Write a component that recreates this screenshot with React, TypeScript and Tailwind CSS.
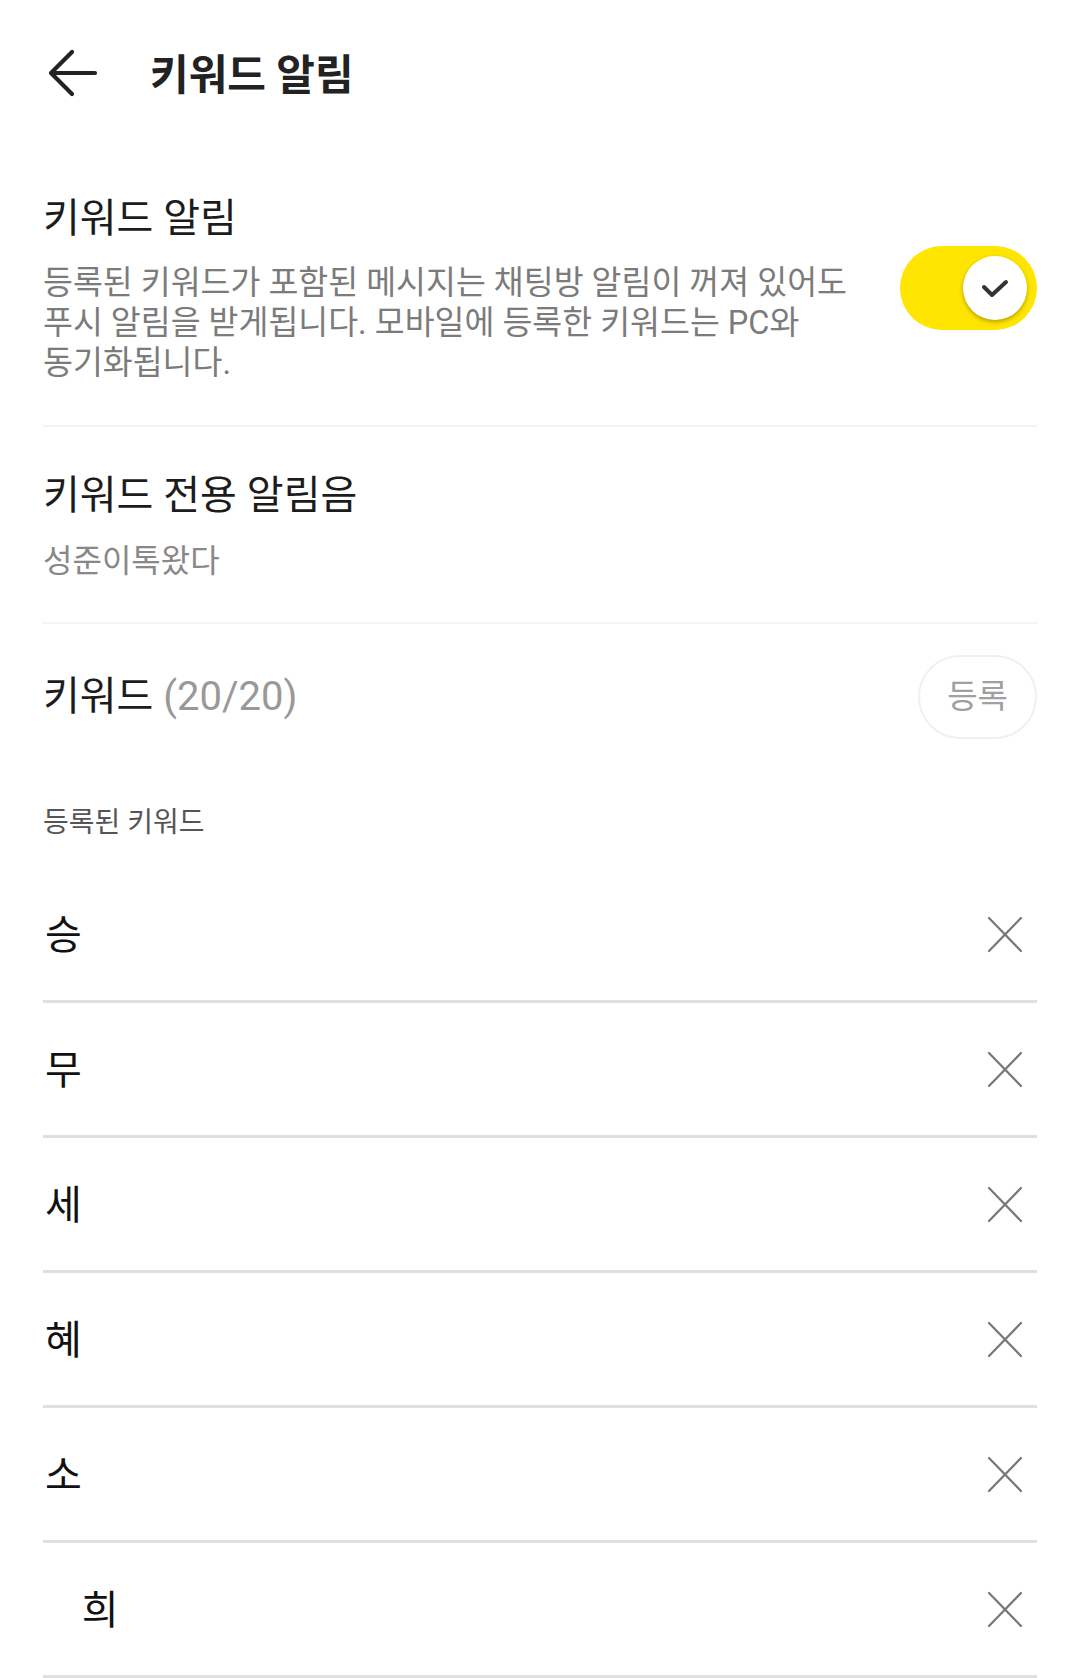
import React from "react";

const KEYWORDS = [
  { hidden: "", text: "승" },
  { hidden: "", text: "무" },
  { hidden: "", text: "세" },
  { hidden: "", text: "혜" },
  { hidden: "", text: "소" },
  { hidden: "김", text: "희" },
];

function BackArrow() {
  return (
    <svg width="50" height="48" viewBox="0 0 50 48" fill="none" stroke="#222" strokeWidth="4.2" strokeLinecap="round" strokeLinejoin="round">
      <path d="M4 24H47" />
      <path d="M24 3L3 24L24 45" />
    </svg>
  );
}

function CloseIcon() {
  return (
    <svg width="36" height="37" viewBox="0 0 36 37" fill="none" stroke="#777" strokeWidth="2.2" strokeLinecap="round">
      <path d="M2 2L34 35" />
      <path d="M34 2L2 35" />
    </svg>
  );
}

function Toggle() {
  return (
    <div className="flex h-[84px] w-[137px] shrink-0 items-center justify-end rounded-full bg-[#FFE500] pr-[10px]">
      <div className="flex h-[64px] w-[64px] items-center justify-center rounded-full bg-white shadow-[0_2px_4px_rgba(0,0,0,0.3)]">
        <svg width="30" height="22" viewBox="0 0 30 22" fill="none" stroke="#333" strokeWidth="4" strokeLinecap="round" strokeLinejoin="round">
          <path d="M4 10L12 18L26 5" />
        </svg>
      </div>
    </div>
  );
}

export default function App() {
  return (
    <div className="min-h-[1678px] w-[1080px] bg-white font-[Roboto,'Noto_Sans_CJK_KR',sans-serif] text-[#1c1c1c] break-keep">
      <header className="flex h-[146px] items-center gap-[52px] pl-[48px]">
        <BackArrow />
        <h1 className="mt-[5px] text-[42px] font-bold leading-[48px] text-[#222]">키워드 알림</h1>
      </header>

      <div className="px-[43px]">
        <section className="flex items-center justify-between border-b-2 border-[#f3f3f3] pt-[46px] pb-[42px]">
          <div className="w-[840px]">
            <h2 className="mt-[3px] text-[40px] font-normal leading-[48px]">키워드 알림</h2>
            <p className="mt-[20px] text-[32.5px] leading-[40px] text-[#7b7b7b]">
              등록된 키워드가 포함된 메시지는 채팅방 알림이 꺼져 있어도 푸시 알림을 받게됩니다. 모바일에 등록한 키워드는 PC와 동기화됩니다.
            </p>
          </div>
          <Toggle />
        </section>

        <section className="border-b-2 border-[#f3f3f3] pt-[45px] pb-[41px]">
          <h2 className="text-[40px] font-normal leading-[48px]">키워드 전용 알림음</h2>
          <p className="mt-[21px] text-[32px] leading-[40px] text-[#888]">성준이톡왔다</p>
        </section>

        <section className="mt-[31px] flex h-[84px] items-center justify-between">
          <h2 className="text-[40px] font-normal leading-[48px]">
            키워드 <span className="text-[#999]">(20/20)</span>
          </h2>
          <button className="flex h-[84px] w-[119px] items-center justify-center rounded-full border-2 border-[#f0f0f0] text-[33px] text-[#a0a0a0]">
            등록
          </button>
        </section>

        <p className="mt-[66px] text-[28px] leading-[36px] text-[#555]">등록된 키워드</p>

        <ul className="mt-[27px]">
          {KEYWORDS.map((k, i) => (
            <li key={i} className="flex h-[135px] items-center justify-between border-b-[3px] border-[#e0e0e0] pl-[2px] pr-[14px]">
              <span className="mt-[3px] text-[40px] leading-[48px] text-[#111]">
                {k.hidden && <span className="invisible">{k.hidden}</span>}
                {k.text}
              </span>
              <CloseIcon />
            </li>
          ))}
        </ul>
      </div>
    </div>
  );
}
